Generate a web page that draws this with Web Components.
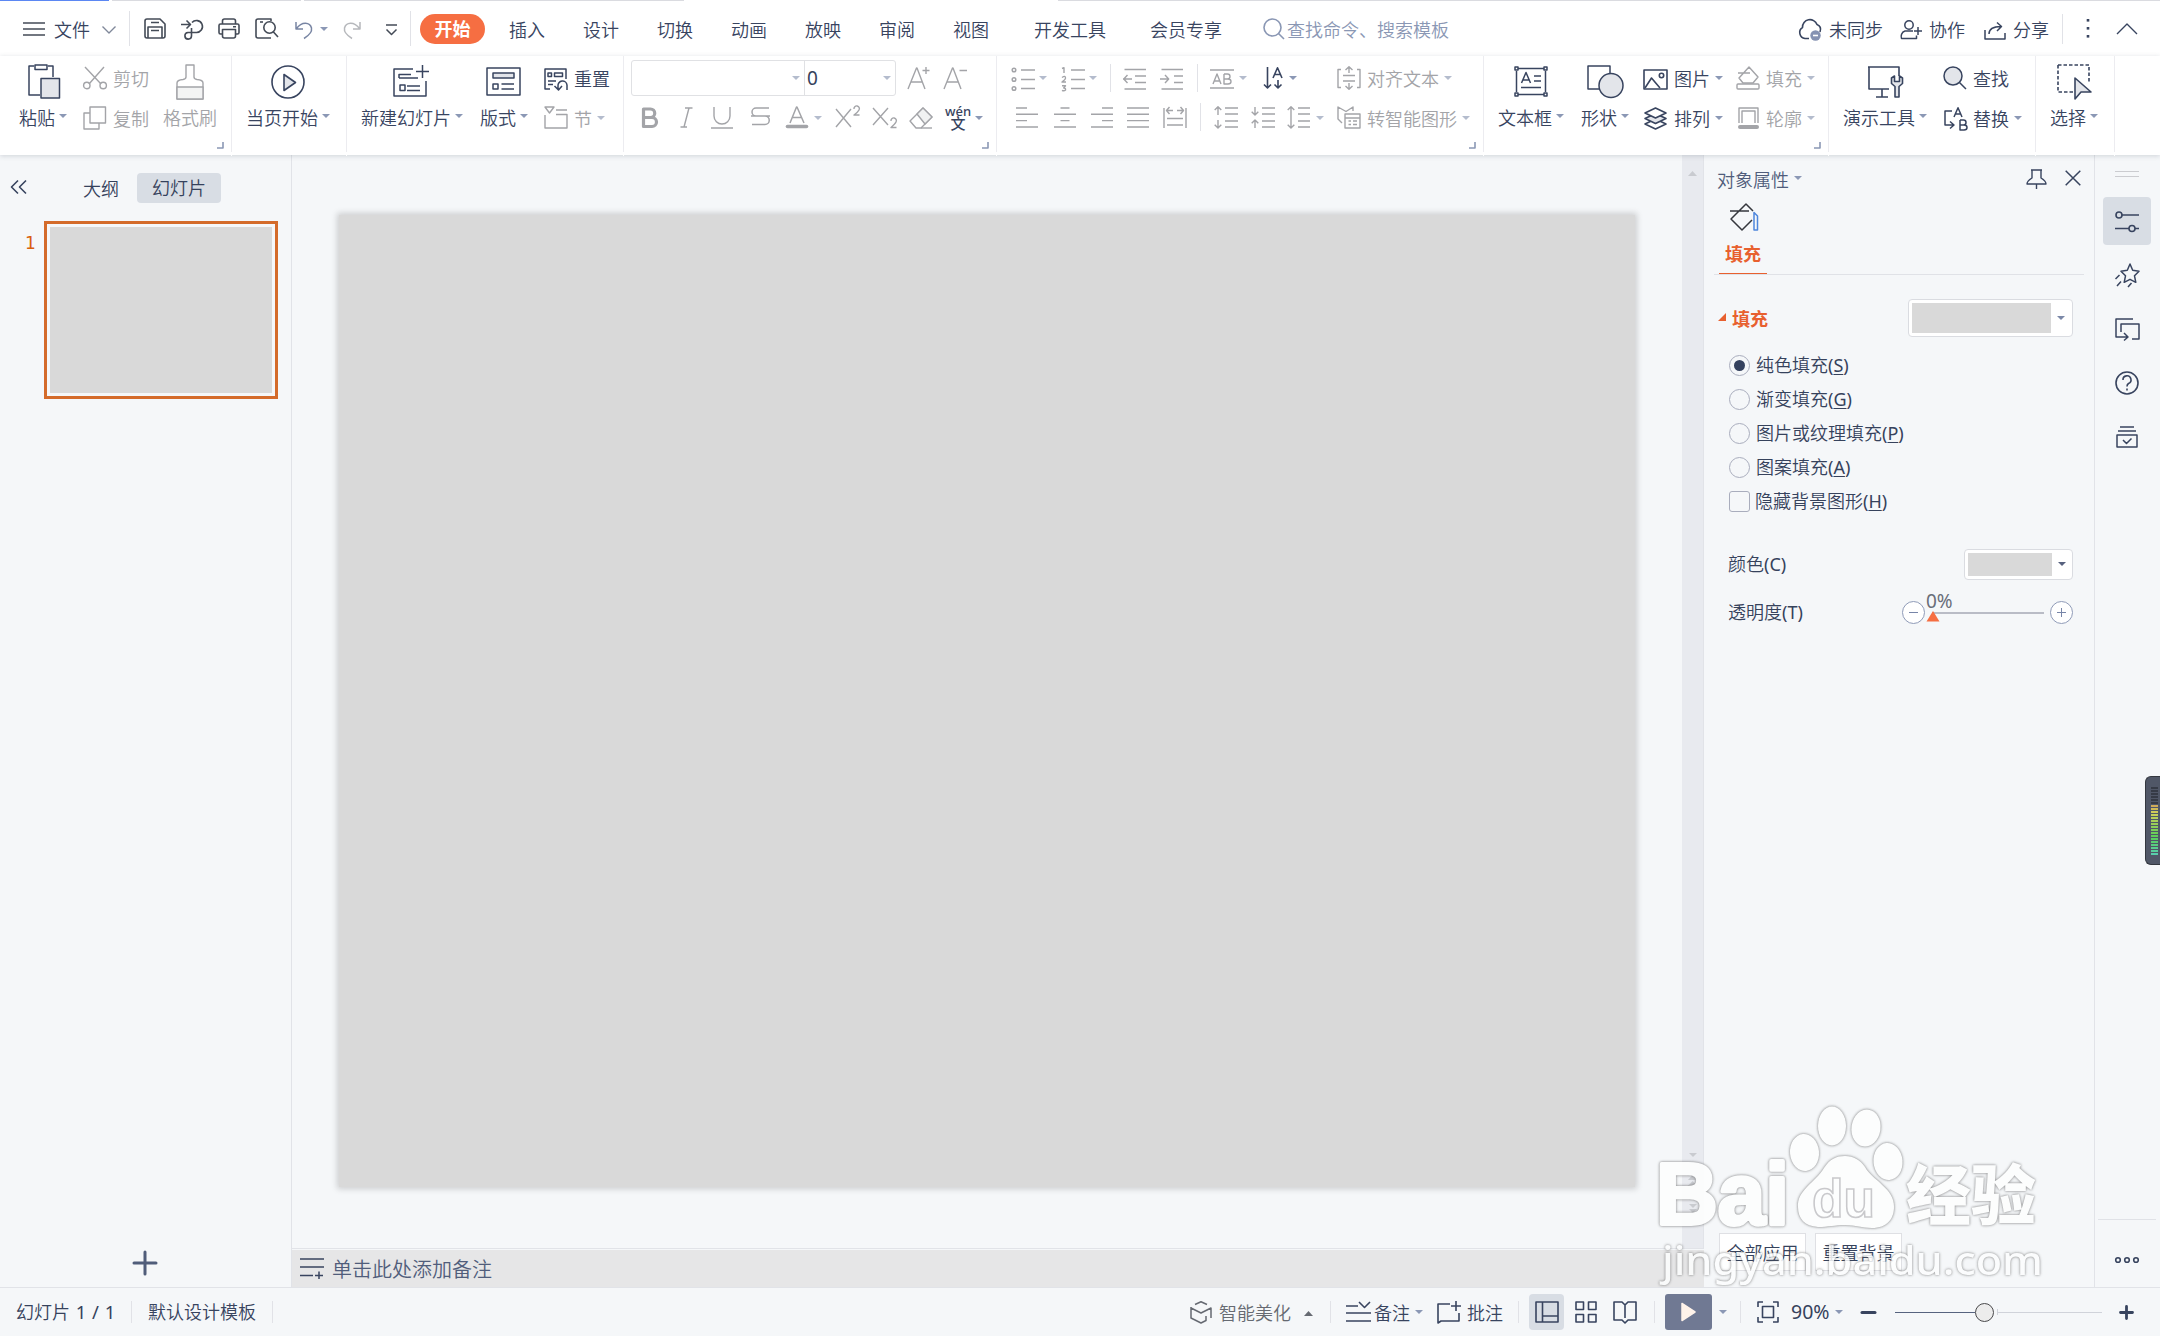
<!DOCTYPE html>
<html lang="zh-CN">
<head>
<meta charset="utf-8">
<title>演示文稿</title>
<style>
html,body{margin:0;width:2160px;height:1336px;overflow:hidden;background:#f5f7f9}
body{font-family:"Noto Sans","Noto Sans CJK SC",sans-serif;font-size:18px;font-weight:350;color:#36425c}
</style>
</head>
<body>
<app-window></app-window>
<script>
const L = 'fill="#e3e5ea"';
/* name: [width, height, markup, stroke width] */
const ICONS = {
  burger:[22,14,'<path d="M0 1H22M0 7H22M0 13H22"/>',1.4],
  chevDown:[14,8,'<path d="M.5 .5L7 7L13.5 .5"/>',1.4],
  chevUp:[22,12,'<path d="M1 11L11 1L21 11"/>',1.4],
  save:[22,21,'<path d="M3 1H16L21 6V18Q21 20 19 20H3Q1 20 1 18V3Q1 1 3 1ZM4 20V9H18V20M7 4.5H15M7 12.5H15"/>',1.6],
  export:[22,21,'<path d="M0 5.500H9M5.500 1.500L9.500 5.500L5.500 9.500M10 13.500H15A6 6 0 1 0 11 3.500M10.500 9V17A3.300 3.300 0 1 1 7 13.500H10"/>',1.6],
  print:[22,21,'<path d="M4.500 6V3Q4.500 1 6.500 1H15.500Q17.500 1 17.500 3V6M4 16H2.500Q1 16 1 14.500V7.500Q1 6 2.500 6H19.500Q21 6 21 7.500V14.500Q21 16 19.500 16H18M4.500 11.500H17.500V18Q17.500 20 15.500 20H6.500Q4.500 20 4.500 18ZM15 8.700H18"/>',1.6],
  preview:[24,21,'<path d="M16 3V1H3Q1 1 1 3V18Q1 20 3 20H16M18 13.500L23 19"/><circle cx="14.500" cy="9.500" r="5.700"/><path d="M5 4H8" />',1.6],
  undo:[18,18,'<path d="M1 1V8H8M1.500 7.500C7 0 15 1 16.500 7C17.500 12 13 15 9 17.500"/>',1.5],
  redo:[18,18,'<path d="M17 1V8H10M16.500 7.500C11 0 3 1 1.500 7C.5 12 5 15 9 17.500"/>',1.5],
  more:[13,12,'<path d="M1 1H12M1.500 5.500L6.500 10.500L11.500 5.500"/>',1.5],
  search:[22,22,'<circle cx="9.500" cy="9.500" r="8.500"/><path d="M15.500 15.500L21 21"/>',1.6],
  cloud:[25,22,'<path d="M11 19.500H7A6 6 0 0 1 4.500 8.500A7.500 7.500 0 0 1 19 5.500Q24 7.500 22 13"/><circle cx="17.500" cy="16.500" r="5.200" fill="#8592b2" stroke="none"/><path d="M15 16.500H20" stroke="#fff"/>',1.6],
  person:[22,20,'<circle cx="9" cy="5" r="4.200"/><path d="M13 11H5C1.500 12 .5 16 1.500 18.500H16.500V15.500M18 7V15M14 11H22"/>',1.5],
  share:[22,18,'<path d="M1 8V17H21V11M5 12C5 7 8 4.500 17 4.500M13 .5L17.500 4.500L13 9"/>',1.5],
  dotsV:[4,20,'<g fill="currentColor" stroke="none"><rect x=".7" y="0" width="2.600" height="2.600"/><rect x=".7" y="8" width="2.600" height="2.600"/><rect x=".7" y="16" width="2.600" height="2.600"/></g>',1],
  paste:[33,35,'<path d="M6 2H1V31H12M20 2H25V13"/><rect x="7" y="1" width="12" height="4.500"/><rect x="13" y="14.500" width="18.500" height="19.500" '+L+'/>',1.5],
  cut:[24,24,'<path d="M2 1L18 18M21 1L6 18"/><circle cx="3.800" cy="19.500" r="3.200"/><circle cx="20.200" cy="19.500" r="3.200"/>',1.4],
  copy:[24,24,'<path d="M7 7H1V23H16V17"/><rect x="7" y="1" width="15.500" height="16"/>',1.4],
  brush:[28,36,'<path d="M10 1H18V13Q18 15 21 15.500Q27 16 27 19V35H1V19Q1 16 7 15.500Q10 15 10 13Z"/><path d="M1 23H27V35H1Z" fill="#f3f4f4"/>',1.4],
  play:[34,34,'<circle cx="17" cy="17" r="16"/><path d="M13 9.500V25.500L24.500 17.500Z" '+L+'/>',1.6],
  newSlide:[36,34,'<path d="M20 4H1V31H33V16M29.500 0V13M23 6.500H36M14 21H27M14 25.500H27"/><rect x="7" y="20" width="5" height="5.500"/><path d="M6 13V9.500H18M6 13H25"/>',1.5],
  layout:[35,29,'<rect x="1" y="1" width="33" height="27"/><rect x="7" y="6" width="21" height="5" '+L+'/><rect x="7" y="17" width="5" height="5"/><path d="M15.500 17H28M15.500 22H28"/>',1.5],
  reset:[24,23,'<path d="M6 21H1V1H22V11M4 13H12M4 16.500H9"/><rect x="4" y="5" width="3.500" height="3.500"/><rect x="10.500" y="5" width="8" height="3.500"/><path d="M14 21V18A4.500 4.500 0 0 1 23 17V22M10.500 18L14.500 22L18 18"/>',1.5],
  section:[24,23,'<path d="M1 1H10L5.500 7ZM12 4H23M1 9V22H23V8.500H12"/>',1.4],
  fontUp:[23,24,'<path d="M1 23L9.500 2H10L18 23M4 16H15M19 1V8M15.500 4.500H22.500"/>',1.4],
  fontDown:[24,24,'<path d="M1 23L9.500 2H10L18 23M4 16H15M16.500 4.500H24"/>',1.4],
  bold:[18,22,'<path d="M2.500 2H9.500A4 4 0 0 1 9.500 10.500H2.500ZM2.500 10.500H11A4.200 4.200 0 0 1 11 19.500H2.500Z"/>',3.2],
  italic:[13,21,'<path d="M5 1H12.500M.5 20H7M9 1L4 20"/>',1.4],
  underline:[22,22,'<path d="M3 0V9A8 8 0 0 0 19 9V0M0 21H22"/>',1.4],
  strike:[19,19,'<path d="M18 1H5A4 4 0 0 0 5 9H14A4 4 0 0 1 14 17.500H1M0 9H19"/>',1.5],
  fontColor:[22,22,'<path d="M4 17L10.500 1H11L18 17M6.500 11.500H15.500"/><path d="M1.500 20.500H20.500" stroke-width="3.600" stroke-linecap="round"/>',1.5],
  sup:[25,22,'<path d="M1 3L16 21M16 3L1 21"/><path d="M19 3A2.700 2.700 0 1 1 24 4Q23 6 19 9H24.500"/>',1.4],
  sub:[25,22,'<path d="M1 1L16 18M16 1L1 18"/><path d="M19 14A2.700 2.700 0 1 1 24 15Q23 17 19 20.500H24.500"/>',1.4],
  eraser:[24,22,'<path d="M1 14L14 1L23 10L12 21H7Z"/><path d="M8 7L14 1L23 10L16 17Z" fill="#f1f2f2"/><path d="M12 21H23"/>',1.4],
  bullets:[24,24,'<circle cx="3" cy="3" r="1.800"/><circle cx="3" cy="12.500" r="1.800"/><circle cx="3" cy="21.500" r="1.800"/><path d="M10 3H24M10 12.500H24M10 21.500H24"/>',1.5],
  numbers:[24,24,'<path d="M1 1.500L3 .7V6M1 10.500Q4.500 8 4.500 11Q4.500 12.500 1 15H5M1 18.800H4.500L2.700 21Q5 21 4.500 23Q3 24.500 1 23.300M10 3H24M10 12.500H24M10 21.500H24"/>',1.4],
  outdent:[24,22,'<path d="M1.500 1.500H23M12 8H23M12 14.500H23M1.500 21H23M0 11H9M4.500 7L.8 11L4.500 15"/>',1.4],
  indent:[24,22,'<path d="M1.500 1.500H23M14 8H23M14 14.500H23M1.500 21H23M0 11H9M5 7L8.700 11L5 15"/>',1.4],
  ab:[24,20,'<path d="M0 1H24M0 19H24M3 15L7 5L11 15M4.500 12H9.500M14 5V15H18Q21 15 21 12.500Q21 10 18 10H14M14 5H17.500Q20 5 20 7.500Q20 10 17.500 10"/>',1.4],
  textDir:[21,22,'<path d="M4.500 0V21M1 17.500L4.500 21L8 17.500M10 11L14.500 .8L19 11M11.500 7.500H17.500M15 13V21M11.500 17.500L15 21L18.500 17.500"/>',1.6],
  alignText:[24,24,'<path d="M4 3.500H1V21.500H4M20 3.500H23V21.500H20M6 9.500H18M6 15H18M12 7V.7M8.500 4L12 .7L15.500 4M12 17V23M8.500 20L12 23.300L15.500 20"/>',1.4],
  aLeft:[22,21,'<path d="M0 1H11M0 7.300H22M0 13.600H11M0 20H22"/>',1.4],
  aCenter:[22,21,'<path d="M6.500 1H15.500M0 7.300H22M6.500 13.600H15.500M0 20H22"/>',1.4],
  aRight:[22,21,'<path d="M11 1H22M0 7.300H22M11 13.600H22M0 20H22"/>',1.4],
  justify:[22,21,'<path d="M0 1H22M0 7.300H22M0 13.600H22M0 20H22"/>',1.4],
  distribute:[24,22,'<path d="M1 2V22M23 2V22M4 12.500H20M4 19H20M3.500 4.500H10M6.500 1L3.500 4.500L6.500 8M14 4.500H20.500M17.500 1L20.500 4.500L17.500 8"/>',1.4],
  spaceUp:[24,23,'<path d="M11 2H24M11 8H24M11 15H24M11 21H24M4 9V.8M.7 4L4 .8L7.300 4M4 14V22M.7 18.700L4 22L7.300 18.700"/>',1.4],
  spaceDown:[24,23,'<path d="M11 2H24M11 8H24M11 15H24M11 21H24M4 1V9M.7 5.700L4 9L7.300 5.700M4 22V14M.7 17.300L4 14L7.300 17.300"/>',1.4],
  lineSpace:[24,23,'<path d="M11 2H23M11 8H23M11 15H23M11 21H23M4 .8V22M.7 4L4 .8L7.300 4M.7 18.700L4 22L7.300 18.700"/>',1.4],
  smart:[24,23,'<path d="M5 17L1 13V1L9 5.500L16 1V5M8 8H23V22H8ZM8 12H23M11.500 15H14M16 15H20M11.500 18.500H14M16 18.500H20"/>',1.4],
  textBox:[34,31,'<path d="M4 2.500H30M2.500 5V26M31.500 5V26M4 28.500H30M7.500 17L12 6.500L16.500 17M9 14H15M20 10H27M20 15H27M7 21.500H27"/><g fill="#fff"><rect x="1" y="1" width="3" height="3"/><rect x="30" y="1" width="3" height="3"/><rect x="1" y="27" width="3" height="3"/><rect x="30" y="27" width="3" height="3"/></g>',1.5],
  shapes:[37,34,'<path d="M12 24H1V1H23V10"/><circle cx="24" cy="20.500" r="12" '+L+'/>',1.5],
  picture:[25,21,'<rect x="1" y="1" width="23" height="19"/><path d="M2 19L8.500 9L17 19"/><circle cx="18.500" cy="6.500" r="2.200"/>',1.6],
  layers:[23,23,'<path d="M11.500 12L1 17L11.500 22L22 17Z" fill="#fff"/><path d="M11.500 6.500L1 11.500L11.500 16.500L22 11.500Z" '+L+'/><path d="M11.500 1L1 6L11.500 11L22 6Z" fill="#fff"/>',1.6],
  bucket:[24,24,'<path d="M13 1L22 11L17 17H7L3 12ZM2 7H14"/><rect x="1" y="18" width="22" height="5" rx="1"/>',1.4],
  outline:[21,22,'<path d="M1 16V1H20V16M4 16V4H17V16"/><path d="M2 20H19" stroke-width="4" stroke-linecap="round"/>',1.4],
  tools:[37,32,'<path d="M32 10V1H1M2 1V23H22M15 23V31M9 31H21"/><path d="M24.500 12V17.500L28 20.500V31H32V20.500L35.500 17.500V12L32.500 10V15.500H27.500V10Z" '+L+'/>',1.6],
  find:[24,24,'<circle cx="10" cy="10" r="9" '+L+'/><path d="M16.500 16.500L23 23"/>',1.5],
  replace:[24,24,'<path d="M8 4H1V18H9M6 14.500L10 18L6 21.500M10 10L14 .7L18 10M11.500 7H16.500M16 13V23H20Q23 23 23 20.500Q23 18 20 18H16M16 13H19.500Q22 13 22 15.500Q22 18 19.500 18"/>',1.5],
  select:[36,36,'<path d="M1 1H32V19M1 1V28H17" stroke-dasharray="3.500 2"/><path d="M18 14V35L24 28H34Z" '+L+'/>',1.6],
  corner:[7,7,'<path d="M6 0V6H0"/>',1.6],
  collapse:[17,14,'<path d="M8 .5L1.500 7L8 13.500M16 .5L9.500 7L16 13.500"/>',1.6],
  plus:[26,26,'<path d="M13 2V24M2 13H24" stroke-linecap="round"/>',3],
  noteAdd:[25,21,'<path d="M0 1H24M0 9H24M0 17.500H13M15 17.500H23M19 13.500V21"/>',1.5],
  pin:[21,20,'<path d="M5 1H16M6 1V9Q1 12 1 15H20Q20 12 15 9V1M10.500 15V20"/>',1.4],
  close:[16,16,'<path d="M.7 .7L15.300 15.300M15.300 .7L.7 15.300"/>',1.5],
  fillTab:[30,30,'<g stroke="#35373d"><path d="M24 9L17 2L2 17L13 28L23 18M1 9H20"/></g><path d="M25 10.500L28.500 14V28H25Z" stroke="#4e86dc"/>',1.5],
  sliders:[24,21,'<circle cx="4" cy="4" r="3"/><path d="M7 4H24M0 17.500H14M20 17.500H24"/><circle cx="17" cy="17.500" r="3"/>',1.6],
  star:[25,25,'<path d="M15 1L17.700 7.300L24 8.200L19.500 12.800L20.800 19.300L15 16.300L9.200 19.300L10.500 12.800L6 8.200L12.300 7.300ZM4.500 12L.5 16M6 18.500L2 23M16.500 20L13 24"/>',1.5],
  swap:[25,23,'<path d="M18 1H1V19H12M9 15L13 19L9 22.500M6 14V6H24V21H17"/>',1.5],
  help:[24,24,'<circle cx="12" cy="12" r="11"/><path d="M8 9A4 4 0 1 1 13.500 12.500Q12 13.500 12 15.500M12 17.500V19.500"/>',1.6],
  archive:[22,22,'<path d="M4 1H18M2 5H20M1 9H21V21H1ZM7 14L10.500 17.500L15.500 12.500"/>',1.5],
  ooo:[26,8,'<circle cx="4" cy="4" r="2.300"/><circle cx="13" cy="4" r="2.300"/><circle cx="22" cy="4" r="2.300"/>',1.6],
  beauty:[22,23,'<path d="M5 3.500L11 .8L17 3.500M1 6V17L11 22L16 19.500V15M1 7L11 12L21 7V17"/>',1.5],
  notes:[25,21,'<path d="M0 5H12M0 12H25M0 20H25M13 1L18.500 6.500L24 1"/>',1.6],
  comment:[24,23,'<path d="M13 3H1V22L4 20H22V12M19 0V10M14 5H24"/>',1.6],
  normal:[24,22,'<path d="M1 1H23V21H1ZM7.500 1V21M7.500 15H23"/>',1.6],
  grid:[22,22,'<path d="M1 1H8.500V8.500H1ZM13.500 1H21V8.500H13.500ZM1 13.500H8.500V21H1ZM13.500 13.500H21V21H13.500Z"/>',1.6],
  book:[24,23,'<path d="M12 4V17M12 4L9 1H1V19H9L12 22L15 19H23V1H15Z"/>',1.6],
  fit:[22,22,'<path d="M1 6V1H6M16 1H21V6M21 16V21H16M6 21H1V16"/><rect x="5.500" y="5.500" width="11" height="11"/>',1.6],
  minusB:[15,5,'<path d="M1 2.500H14" stroke-linecap="round"/>',3],
  plusB:[15,15,'<path d="M7.500 1.500V13.500M1.500 7.500H13.500" stroke-linecap="round"/>',2.8],
  tri:[8,4,'<path d="M0 0H8L4 4Z" fill="currentColor" stroke="none"/>',0],
  triUp:[9,5,'<path d="M0 5H9L4.500 0Z" fill="currentColor" stroke="none"/>',0],
  triCorner:[8,8,'<path d="M8 0V8H0Z" fill="currentColor" stroke="none"/>',0],
};
const define = (name, render) => customElements.define(name, class extends HTMLElement {
  connectedCallback(){
    if(this.shadowRoot) return;
    this.attachShadow({mode:'open'}).innerHTML = render(this);
  }
});
const BASE = `:host,*{box-sizing:border-box}.c{flex:none;display:flex;align-items:center;white-space:nowrap;line-height:26px}
.row{display:flex;align-items:center}.dis{color:#a3a4a8}.dk{color:#38445f}.b{font-weight:700}`;

/* Flow helpers: every cell is a flex item, spaced from the previous one. */
const flow = (start, cells) => { let end = start; return cells.map(([x,w,html,cls='',dy=0]) => {
  const m = x-end; end = x+w;
  return `<span class="c ${cls}" style="margin-left:${m}px;width:${w}px;${dy?`margin-top:${dy*2}px`:''}">${html}</span>`; }).join(''); };
const I = (x,name,cls='dk',dy=0) => [x,ICONS[name][0],`<ui-icon name="${name}"></ui-icon>`,cls,dy];
const T = (x,s,cls='dk',dy=0,size=18) => [x,Math.round(s.length*size),s,cls,dy];
const C = (x,cls='car',dy=0) => [x,8,'<ui-icon name="tri"></ui-icon>',cls,dy];
const S = (x,h=28,dy=0) => [x,1,`<i style="width:1px;height:${h}px;background:#e1e2e7"></i>`,'',dy];

define('ui-icon', el => { const [w,h,m,s] = ICONS[el.getAttribute('name')];
  return `<style>:host{display:block;flex:none;width:${w}px;height:${h}px}svg{display:block;overflow:visible}</style>
  <svg width="${w}" height="${h}" viewBox="0 0 ${w} ${h}" fill="none" stroke="currentColor" stroke-width="${s}" stroke-linejoin="round">${m}</svg>`; });

/* Large ribbon button: icon above, caption with optional arrow below. */
define('ribbon-button', el => { const g = n => el.getAttribute(n);
  return `<style>:host{display:flex;flex-direction:column;flex:none;color:#38445f;white-space:nowrap}:host([off]){color:#a3a4a8}
  .i{height:35px;display:flex;align-items:center;padding-left:${g('indent')}px;margin-top:8px}
  .t{display:flex;align-items:center;height:26px;line-height:26px;margin-top:6px}.t ui-icon{color:#8b98b5;margin-left:4px;margin-bottom:4px}</style>
  <div class="i"><ui-icon name="${g('icon')}"></ui-icon></div><div class="t"><slot></slot>${el.hasAttribute('menu')?'<ui-icon name="tri"></ui-icon>':''}</div>`; });
const B = (x,label,icon,indent,menu=true,off=false) => [x,label.length*18+(menu?12:0),`<ribbon-button icon="${icon}" indent="${indent}" ${menu?'menu':''} ${off?'off':''}>${label}</ribbon-button>`,'big'];

/* Ribbon group with divider and optional launcher mark. */
define('ribbon-group', el => `<style>:host{display:flex;flex-direction:column;flex:none;height:100px;border-right:1px solid transparent;
  border-image:linear-gradient(#fff 1px,#ececf0 1px 95px,#fff 95px) 1;box-sizing:border-box;width:${el.getAttribute('width')}px}
  .m{display:flex;height:86px}.f{display:flex;justify-content:flex-end;padding-right:7px;color:#8b98b5}</style>
  <div class="m"><slot></slot></div>${el.hasAttribute('launcher')?'<div class="f"><ui-icon name="corner"></ui-icon></div>':''}`);

define('menu-bar', () => `<style>${BASE}:host{display:block;height:56px;background:#fff}
  .tabs{display:flex;height:1px}.tabs i{height:1px;background:#dadbe0}
  .row{height:55px}.pill{height:30px;margin-top:0}.pill span{display:block;width:65px;height:30px;line-height:30px;border-radius:15px;background:#f66e42;color:#fff;font-weight:700;text-align:center}
  .g{color:#8a97b4}.q{color:#444b57}.u{color:#7885a3}.l{color:#b6b8bc}.ch{color:#80889a}.car{color:#8b98b5}</style>
  <div class="tabs"><i style="width:109px;background:#5b87f3"></i><i style="width:189px;margin-left:3px"></i><i style="width:380px;margin-left:3px"></i><i style="width:1102px;margin-left:374px"></i></div>
  <div class="row">${flow(0,[
   I(23,'burger','q'),T(54,'文件','dk',1),I(102,'chevDown','ch',1),S(129,35),
   I(144,'save','q'),I(181,'export','q',1),I(218,'print','q'),I(255,'preview','q'),I(295,'undo','u',1),C(320),I(343,'redo','l',1),I(385,'more','q',1),S(410,35),
   [420,65,'<span>开始</span>','pill',0.5],T(509,'插入','dk',1),T(583,'设计','dk',1),T(657,'切换','dk',1),T(731,'动画','dk',1),T(805,'放映','dk',1),T(879,'审阅','dk',1),T(953,'视图','dk',1),
   T(1034,'开发工具','dk',1),T(1150,'会员专享','dk',1),I(1263,'search','g'),T(1287,'查找命令、搜索模板','g',1),
   I(1798,'cloud','dk',1),T(1829,'未同步','dk',1),I(1900,'person','dk',1),T(1929,'协作','dk',1),I(1984,'share','dk',2),T(2013,'分享','dk',1),S(2062,30),I(2086,'dotsV'),I(2116,'chevUp')
  ])}</div>`);

const two = (start, a, b) => `<div class="st"><div class="r1">${flow(start,a)}</div><div class="r2">${flow(start,b)}</div></div>`;
define('app-ribbon', () => `<style>${BASE}:host{display:flex;height:99px;background:#fff;box-shadow:0 1px 5px rgba(60,70,90,.2);position:relative;z-index:1}
  .big{align-items:flex-start;height:85px}.st{display:flex;flex-direction:column;flex:none}
  .r1,.r2{display:flex;align-items:center}.r1{height:46px}.r2{height:31px}.car{color:#8b98b5}.cd{color:#b4bccd}
  .box{display:flex;width:265px;height:36px;border:1px solid #e0e1e4;border-radius:3px;color:#36425c;line-height:33px}
  .box b,.box em{display:flex;align-items:center;justify-content:flex-end;font:inherit;padding-right:4px;color:#b4bccd}.box b{width:173px;border-right:1px solid #e0e1e4}.box em{width:90px}.box u{flex:1;text-decoration:none;color:#36425c;padding-left:2px;line-height:33px;font-size:19px;font-weight:400}
  .wen{display:flex;flex-direction:column;align-items:center;width:24px;font-size:13px;line-height:12px;font-weight:500;padding-bottom:2px}.wen b{font-size:15px;line-height:12px;height:12px;font-weight:500}.wen span{height:12px}</style>
  <ribbon-group width="232" launcher>${flow(0,[B(19,'粘贴','paste',9)])}
   ${two(67,[I(83,'cut','dis',-1),T(113,'剪切','dis')],[I(83,'copy','dis'),T(113,'复制','dis',1)])}${flow(149,[B(163,'格式刷','brush',13,false,true)])}</ribbon-group>
  <ribbon-group width="115">${flow(232,[B(246,'当页开始','play',25)])}</ribbon-group>
  <ribbon-group width="277">${flow(347,[B(361,'新建幻灯片','newSlide',32),B(480,'版式','layout',6)])}
   ${two(528,[I(544,'reset'),T(574,'重置')],[I(544,'section','dis'),T(574,'节','dis',1),C(597,'cd')])}</ribbon-group>
  <ribbon-group width="373" launcher>${two(624,
   [[631,265,'<div class="box"><b><ui-icon name="tri"></ui-icon></b><em><u>0</u><ui-icon name="tri"></ui-icon></em></div>','',-1],I(907,'fontUp','dis',-1),I(943,'fontDown','dis',-1)],
   [I(641,'bold','dis'),I(680,'italic','dis'),I(711,'underline','dis'),I(751,'strike','dis',-1),I(786,'fontColor','dis',-1),C(814,'cd'),I(835,'sup','dis',-1),I(872,'sub','dis'),I(909,'eraser','dis'),[946,24,'<div class="wen"><span>wén</span><b>文</b></div>','dk'],C(975)])}</ribbon-group>
  <ribbon-group width="487" launcher>${two(997,
   [I(1011,'bullets','dis'),C(1039,'cd',-1),I(1061,'numbers','dis'),C(1089,'cd',-1),S(1110,28,-1),I(1123,'outdent','dis'),I(1160,'indent','dis'),S(1197,28,-1),I(1210,'ab','dis'),C(1239,'cd',-1),I(1263,'textDir','dk',-1),C(1289,'car',-1),I(1337,'alignText','dis',-1),T(1367,'对齐文本','dis'),C(1444,'cd',-1)],
   [I(1016,'aLeft','dis'),I(1054,'aCenter','dis'),I(1091,'aRight','dis'),I(1127,'justify','dis'),I(1163,'distribute','dis',-1),S(1200,28,-1),I(1214,'spaceUp','dis'),I(1251,'spaceDown','dis'),I(1287,'lineSpace','dis'),C(1316,'cd'),I(1337,'smart','dis'),T(1367,'转智能图形','dis',1),C(1462,'cd')])}</ribbon-group>
  <ribbon-group width="345" launcher>${flow(1484,[B(1498,'文本框','textBox',16),B(1581,'形状','shapes',6)])}
   ${two(1629,[I(1643,'picture'),T(1674,'图片'),C(1715,'car',-1),I(1736,'bucket','dis',-1),T(1766,'填充','dis'),C(1807,'cd',-1)],
   [I(1644,'layers','dk',1),T(1674,'排列','dk',1),C(1715),I(1738,'outline','dis'),T(1766,'轮廓','dis',1),C(1807,'cd')])}</ribbon-group>
  <ribbon-group width="207">${flow(1829,[B(1843,'演示工具','tools',24)])}
   ${two(1927,[I(1943,'find','dk',-1),T(1973,'查找')],[I(1944,'replace','dk',1),T(1973,'替换','dk',1),C(2014)])}</ribbon-group>
  <ribbon-group width="79">${flow(2036,[B(2050,'选择','select',7)])}</ribbon-group>`);

define('slide-panel', () => `<style>${BASE}:host{display:flex;flex-direction:column;flex:none;width:292px;border-right:1px solid #e1e3e8;color:#36425c}
  .head{display:flex;align-items:center;height:66px}.tab span{width:84px;height:30px;border-radius:4px;background:#d8dde4;text-align:center;line-height:30px;display:block}
  .item{display:flex;padding-left:27px;flex:1;align-items:flex-start}.n{width:17px;font:17px/20px "DejaVu Sans",sans-serif;color:#d9600f;margin-top:12px;margin-left:-2px;margin-right:2px}
  .th{width:234px;height:178px;border:3px solid #d46b2b;padding:3px}.th i{display:block;height:100%;background:#d9d9d9}
  .add{display:flex;justify-content:center;height:37px;color:#505d7a;padding-right:2px}</style>
  <div class="head">${flow(0,[I(10,'collapse','dk',-1),T(83,'大纲','',1),[137,84,'<span>幻灯片</span>','tab']])}</div>
  <div class="item"><div class="n">1</div><div class="th"><i></i></div></div>
  <div class="add"><ui-icon name="plus"></ui-icon></div>`);

define('slide-stage', () => `<style>${BASE}:host{display:flex;flex-direction:column;flex:none;width:1412px}
  .top{display:flex;height:1093px;border-bottom:1px solid #e1e3e8;box-sizing:content-box}
  .area{width:1390px;padding:60px 0 0 47px}.slide{width:1296px;height:972px;background:#d9d9d9;box-shadow:0 0 6px 2px rgba(0,0,0,.16)}
  .sb{width:22px;background:#e8eaef;display:flex;flex-direction:column;align-items:center;padding-top:16px;color:#c9cbd0;border-right:1px solid #e1e3e8}
  .notes{margin-top:1px;height:37px;background:#e6e6e7;font-size:20px;color:#505d7b;display:flex;align-items:center}</style>
  <div class="top"><div class="area"><div class="slide"></div></div>
  <div class="sb"><ui-icon name="triUp"></ui-icon><ui-icon name="tri" style="margin-top:977px"></ui-icon><ui-icon name="triUp" style="margin-top:18px"></ui-icon><ui-icon name="triUp" style="margin-top:1px"></ui-icon><ui-icon name="tri" style="margin-top:18px"></ui-icon><ui-icon name="tri" style="margin-top:1px"></ui-icon></div></div>
  <div class="notes">${flow(292,[I(300,'noteAdd'),T(332,'单击此处添加备注','',1.5,20)])}</div>`);

define('option-row', el => `<style>:host{display:flex;align-items:center;height:34px;line-height:26px;color:#36425c}
  i{width:21px;height:21px;border:1.5px solid #a9adbd;border-radius:50%;box-sizing:border-box;margin-right:6px;display:flex;align-items:center;justify-content:center}
  :host([kind=check]) i{border-radius:3px;margin-right:5px}:host([checked]) i::after{content:"";width:11px;height:11px;border-radius:50%;background:#34415e}.k{font-weight:400}u{text-underline-offset:2px;text-decoration-thickness:1px}</style>
  <i></i><span><slot></slot><span class="k">(<u>${el.getAttribute('key')}</u>)</span></span>`);

define('color-box', el => `<style>:host{display:flex;align-items:center;background:#fff;border:1px solid #dadce1;border-radius:4px;box-sizing:border-box;width:${el.getAttribute('w')}px;height:${el.getAttribute('h')}px;padding-left:3px;color:#7b88a8}
  i{background:#d9d9d9;width:${el.getAttribute('sw')}px;align-self:stretch;margin:3px 6px 3px 0}</style><i></i><ui-icon name="tri"></ui-icon>`);

define('round-step', el => `<style>:host{display:flex;width:23px;height:23px;box-sizing:border-box;border:1px solid #8f9bb8;border-radius:50%;background:#fff}svg{margin:auto}</style>
  <svg width="9" height="9" viewBox="0 0 9 9" stroke="#7785a8" fill="none"><path d="M0 4.500H9${el.getAttribute('kind')==='plus'?'M4.500 0V9':''}"/></svg>`);

define('property-panel', () => `<style>${BASE}:host{display:flex;flex-direction:column;flex:none;width:391px;border-right:1px solid #e1e3e8;color:#36425c}
  .t{height:48px;color:#505d7b}.car{color:#8b98b5}.tab{margin-left:15px;width:48px;height:72px;display:flex;flex-direction:column;align-items:center;border-bottom:2px solid #e8602f;color:#e8602f;font-weight:700;line-height:26px}
  .tab ui-icon{margin:-1px 0 9px 1px}.line{height:1px;background:#e0e2e7;margin:-1px 10px 0 10px}.or{color:#e8602f;font-weight:700}
  .sec{height:86px}.opts{padding:2px 0 0 25px}.k{font-weight:400}
  .tr{height:64px;align-items:center}.sl{display:flex;flex-direction:column;width:118px;height:40px;color:#696e79}.sl span{line-height:18px;height:20px;margin-left:0;font-size:19px}.sl i{height:2px;background:#b9bcc6;margin-left:6px;width:112px}.sl svg{display:block;margin-top:-3px}
  .btns{display:flex;gap:9px;margin:auto 0 16px 15px}.btns span{width:87px;height:38px;background:#fff;border:1px solid #dfe0e4;text-align:center;line-height:39px;font-size:18px}</style>
  <div class="row t">${flow(1704,[T(1717,'对象属性','',1),C(1794,'car',-1),I(2026,'pin'),I(2065,'close','dk',-1)])}</div>
  <div class="tab"><ui-icon name="fillTab"></ui-icon>填充</div><div class="line"></div>
  <div class="row sec">${flow(1704,[I(1718,'triCorner','or',-1),T(1732,'填充','or',0.5),[1908,165,'<color-box w="165" h="38" sw="139"></color-box>']])}</div>
  <div class="opts" style="margin-top:-15px"><option-row checked key="S">纯色填充</option-row><option-row key="G">渐变填充</option-row><option-row key="P">图片或纹理填充</option-row><option-row key="A">图案填充</option-row><option-row kind="check" key="H">隐藏背景图形</option-row></div>
  <div class="row" style="height:40px;margin-top:26px">${flow(1704,[[1728,70,'颜色<span class="k">(C)</span>'],[1964,109,'<color-box w="109" h="31" sw="84" style="color:#56617e"></color-box>']])}</div>
  <div class="row tr" style="margin-top:-4px">${flow(1704,[[1728,90,'透明度<span class="k">(T)</span>'],[1902,23,'<round-step></round-step>'],[1926,120,'<div class="sl"><span>0%</span><i></i><svg width="14" height="11" viewBox="0 0 14 11"><path d="M7 0L13.500 10.500H.5Z" fill="#f66e42"/></svg></div>','k'],[2050,23,'<round-step kind="plus"></round-step>']])}</div>
  <div class="btns"><span>全部应用</span><span>重置背景</span></div>`);

define('side-rail', () => `<style>${BASE}:host{display:flex;flex-direction:column;flex:none;align-items:center;width:65px;color:#38445f;padding:16px 1px 0 0;background:#f5f7f9}
  .h{width:24px;height:6px;border:solid #cbccd0;border-width:1px 0;margin-bottom:20px}.a,.n{width:48px;height:48px;display:flex;align-items:center;justify-content:center;margin-bottom:6px}.a{background:#d8dde4;border-radius:4px}
  .e{margin-top:auto;width:58px;height:68px;border-top:1px solid #e0e2e7;display:flex;align-items:center;justify-content:center;padding-top:12px}</style>
  <div class="h"></div><div class="a"><ui-icon name="sliders"></ui-icon></div>${['star','swap','help','archive'].map(n=>`<div class="n"><ui-icon name="${n}"></ui-icon></div>`).join('')}
  <div class="e"><ui-icon name="ooo"></ui-icon></div>`);

define('status-bar', () => `<style>${BASE}:host{display:flex;align-items:center;height:49px;border-top:1px solid #e1e3e8;background:#f5f7f9;color:#36425c}
  .car{color:#8b98b5}.bt{color:#666a72}.num{word-spacing:1px;font-weight:400}.num b{font-weight:350}.on i{width:35px;height:36px;background:#d8dde4;border-radius:4px;display:flex;align-items:center;justify-content:center;color:#38445f}
  .go i{width:47px;height:36px;border-radius:3px;background:#707993;display:flex;align-items:center;justify-content:center}.pc{font-size:19.500px;font-weight:400}
  .z{display:flex;align-items:center;width:207px}.z i{height:1px;background:#56637f;width:80px}.z b{width:19px;height:19px;border:1.500px solid #4a4a4c;border-radius:50%;background:#ececec;flex:none}.z em{height:1px;background:#d0d3da;flex:1}.z s{width:1px;height:6px;background:#d0d3da;margin-left:3px}</style>
  ${flow(0,[[16,100,'<span><b>幻灯片</b> <span style="font-size:18.5px">1 / 1</span></span>','num'],S(131,22),T(148,'默认设计模板'),S(272,22),
   I(1190,'beauty','bt'),T(1219,'智能美化','bt',1),I(1304,'triUp','bt',1),S(1330,22),I(1346,'notes','dk',-1),T(1374,'备注','dk',1),C(1415),I(1437,'comment'),T(1467,'批注','dk',1),S(1518,22),
   [1529,35,'<i><ui-icon name="normal"></ui-icon></i>','on'],I(1575,'grid'),I(1612.5,'book'),S(1654,22),
   [1665,47,'<i><svg width="15" height="20" viewBox="0 0 15 20"><path d="M1 1.500V18.500L14 10Z" fill="#fff3ea" stroke="#fff3ea" stroke-width="1.500" stroke-linejoin="round"/></svg></i>','go'],C(1719),S(1740,22),I(1757,'fit'),[1791,42,'90%','pc'],C(1835),I(1861,'minusB'),[1895,207,'<div class="z"><i></i><b></b><s></s><em></em></div>'],I(2119,'plusB')])}`);

define('baidu-mark', () => `<style>:host{display:block;position:absolute;left:1640px;top:1090px;z-index:4}svg{display:block}
  .o{filter:drop-shadow(0 0 1px rgba(90,90,90,.55)) drop-shadow(0 0 1.500px rgba(90,90,90,.4))}</style>
  <svg width="420" height="212" viewBox="1640 1090 420 212" fill="#fdfefe">
   <g class="o" opacity=".93"><text x="1656" y="1224" font-family="Liberation Sans" font-weight="700" font-size="88" textLength="133" lengthAdjust="spacingAndGlyphs" stroke="#fdfefe" stroke-width="4" stroke-linejoin="round">Bai</text>
   <ellipse cx="1804.500" cy="1152.500" rx="14.500" ry="18.500" transform="rotate(-5 1804.500 1152.500)"/><ellipse cx="1832" cy="1126" rx="14" ry="19.500"/><ellipse cx="1866" cy="1128" rx="14.500" ry="18.500" transform="rotate(8 1866 1128)"/><ellipse cx="1888" cy="1161.500" rx="14.500" ry="18.500" transform="rotate(-5 1888 1161.500)"/>
   <path d="M1845 1156C1854 1156 1860 1160 1865 1167C1872 1180 1895 1189 1894 1207C1894 1219 1887 1228 1872 1228C1862 1228 1856 1225 1845 1225C1835 1225 1828 1227 1818 1227C1805 1226 1798 1219 1798 1207C1797 1190 1815 1183 1824 1168C1830 1159 1836 1156 1845 1156Z"/>
   <text x="1906" y="1219" font-family="Noto Sans CJK SC" font-weight="900" font-size="65" textLength="130">经验</text></g>
   <text x="1812" y="1217" font-family="Liberation Sans" font-weight="700" font-size="54" textLength="63" lengthAdjust="spacingAndGlyphs" stroke="#c9c9cc" stroke-width="1.600">du</text>
   <g class="o" opacity=".85"><text x="1662" y="1275" font-family="Noto Sans" font-size="39" font-weight="500" textLength="381" lengthAdjust="spacingAndGlyphs">jingyan.baidu.com</text></g>
  </svg>`);

define('level-meter', () => { let bars=''; for(let i=0;i<23;i++){ const c = i<6?'#363b46':`hsl(${42+(i-6)*7.500},55%,${58}%)`; bars+=`<i style="background:${c}"></i>`; }
  return `<style>:host{display:flex;flex-direction:column;gap:1px;position:absolute;left:2145px;top:776px;width:15px;height:89px;box-sizing:border-box;background:#505767;border:1.500px solid #33373f;border-right:0;border-radius:6px 0 0 6px;padding:10px 0 0 5px;z-index:3}i{display:block;width:7px;height:2px}</style>${bars}`; });

define('app-window', () => `<style>:host{display:flex;flex-direction:column;width:2160px;height:1336px;position:relative;background:#f5f7f9}.main{display:flex;height:1132px}</style>
  <menu-bar></menu-bar><app-ribbon></app-ribbon><div class="main"><slide-panel></slide-panel><slide-stage></slide-stage><property-panel></property-panel><side-rail></side-rail></div><status-bar></status-bar>
  <baidu-mark></baidu-mark><level-meter></level-meter>`);
</script>
</body>
</html>
